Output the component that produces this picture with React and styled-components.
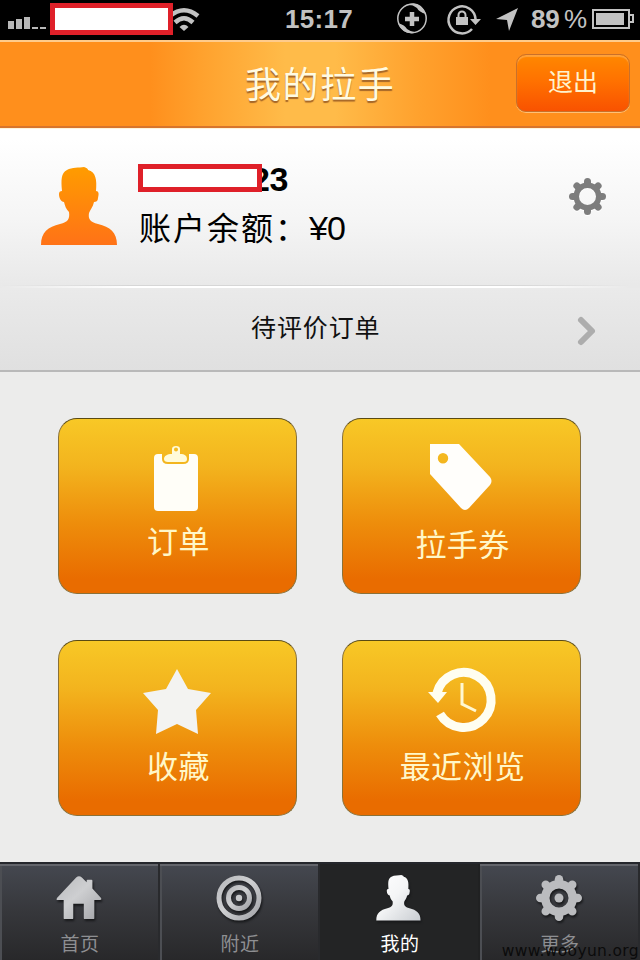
import React from "react";
import styled, { createGlobalStyle, css } from "styled-components";

const GlobalStyle = createGlobalStyle`
  * { box-sizing: border-box; }
  body { margin: 0; background: #ececec; font-family: "Liberation Sans", "Noto Sans CJK SC", sans-serif; }
  svg { display: block; overflow: visible; flex: none; }
`;

const Screen = styled.div`
  position: relative;
  display: flex;
  flex-direction: column;
  width: 640px;
  height: 960px;
  overflow: hidden;
  background: #ececeb;
`;

const StatusBar = styled.div`
  display: flex;
  flex: none;
  align-items: center;
  height: 40px;
  background: #000;
  color: #c2c2c2;
  padding-left: 8px;
`;

const Redaction = styled.div`
  flex: none;
  width: ${(p) => p.$w}px;
  height: ${(p) => p.$h}px;
  border: 5px solid #df2029;
  background: #fff;
`;

const CarrierMask = styled(Redaction)`
  position: relative;
  z-index: 1;
  margin: 0 0 2px 4px;
`;

const StatusText = styled.span`
  flex: none;
  width: ${(p) => p.$w}px;
  margin-left: ${(p) => p.$gap}px;
  font-size: 26px;
  line-height: 39px;
  height: 40px;
  font-weight: ${(p) => p.$weight || 700};
  white-space: nowrap;
  letter-spacing: ${(p) => p.$track || 0}px;
`;

const StatusIcon = styled.svg`
  margin-left: ${(p) => p.$gap}px;
`;

const Header = styled.header`
  display: flex;
  flex: none;
  justify-content: flex-end;
  align-items: flex-start;
  height: 88px;
  padding: 12px 10px 0 0;
  border-top: 2px solid #ffcb8b;
  border-bottom: 2px solid #d8752c;
  background: linear-gradient(90deg, #ff8f1c 150px, #ffa12d 200px, #ffbb49 285px, #ffbb49 335px, #ffa12d 420px, #ff8f1c 490px);
`;

const Title = styled.h1`
  width: 160px;
  margin: 0 111px 0 0;
  font: 400 36px/56px "Noto Sans CJK SC", sans-serif;
  letter-spacing: 1.6px;
  color: #fffbe2;
  text-shadow: 0 2px 1px #a56628;
  white-space: nowrap;
`;

const ExitButton = styled.button`
  width: 114px;
  height: 58px;
  padding: 0 0 6px 0;
  border: 1px solid #c9702a;
  border-radius: 10px;
  background: linear-gradient(#ff8800, #ff7200 45%, #f95200);
  box-shadow: 0 1px 0 #ffc177, inset 0 2px 1px #ffa23b;
  font: 400 25px/48px "Noto Sans CJK SC", sans-serif;
  color: #fff2cd;
`;

const Account = styled.section`
  display: flex;
  flex: none;
  align-items: flex-start;
  height: 157px;
  padding-left: 41px;
  background: linear-gradient(#fff 10px, #f5f5f5 90px, #e9e9e9);
  border-top: 1px solid #fff4d9;
`;

const Avatar = styled.svg`
  margin-top: 38px;
`;

const AccountText = styled.div`
  width: 220px;
  margin: 34px 0 0 19px;
`;

const UserRow = styled.div`
  display: flex;
  align-items: center;
  height: 32px;
  font-size: 34px;
  font-weight: 700;
  line-height: 36px;
  letter-spacing: -0.5px;
`;

const UserMask = styled(Redaction)`
  z-index: 1;
  margin: 0 -11px 2px 0;
`;

const Balance = styled.div`
  display: flex;
  margin: 3px 0 0 1px;
  font-size: 34px;
  line-height: 60px;
  white-space: nowrap;
  letter-spacing: -1px;
`;

const BalanceLabel = styled.span`
  width: 170px;
  font-family: "Noto Sans CJK SC", sans-serif;
  font-size: 32px;
  letter-spacing: 2px;
  line-height: 57px;
`;

const SettingsIcon = styled.svg`
  margin: 49px 0 0 211px;
  filter: drop-shadow(0 1px 0 #fff);
`;

const Divider = styled.div`
  flex: none;
  height: 3px;
  background: linear-gradient(90deg, #e9e9e9, transparent 130px, transparent 510px, #e9e9e9 630px),
    linear-gradient(#d6d6d6 1px, #fff 1px);
`;

const ReviewRow = styled.a`
  display: flex;
  flex: none;
  align-items: center;
  height: 84px;
  padding: 0 44px 0 251px;
  border-bottom: 2px solid #b9b9b9;
  background: linear-gradient(#eaeaea, #e0e0e0);
  font: 400 25px/40px "Noto Sans CJK SC", sans-serif;
  letter-spacing: 0.9px;
  color: #111;
`;

const ReviewLabel = styled.span`
  flex: 1;
  padding-bottom: 7px;
`;

const Chevron = styled.svg`
  margin-top: 2px;
`;

const TileGrid = styled.main`
  display: grid;
  flex: 1;
  grid-template-columns: 239px 239px;
  grid-template-rows: 176px 176px;
  gap: 46px 45px;
  padding: 46px 0 0 58px;
`;

const Tile = styled.button`
  display: flex;
  flex-direction: column;
  align-items: center;
  padding: 26px 0 0;
  border: 1px solid #8a7138;
  border-top-color: #5a4a12;
  border-radius: 19px;
  background: linear-gradient(#f8c826, #f3b41e 27%, #ee8d0b 60%, #e96c00 92%);
  color: #fff7c8;
`;

const TileIcon = styled.svg`
  margin-right: ${(p) => p.$shift || 0}px;
`;

const TileLabel = styled.span`
  margin: ${(p) => p.$top}px 0 0 2px;
  font: 400 31px/44px "Noto Sans CJK SC", sans-serif;
  letter-spacing: 0.4px;
`;

const TabBar = styled.nav`
  display: grid;
  flex: none;
  grid-template-columns: repeat(4, 1fr);
  height: 98px;
  background: #222327;
  border-top: 2px solid #25272c;
`;

const Tab = styled.a`
  display: flex;
  flex-direction: column;
  align-items: center;
  padding: 10px 0 0;
  color: #8e8f92;
  border-right: 2px solid #292a2d;
  ${(p) =>
    p.$active
      ? css`
          background: #232425;
          border-color: #202122;
          color: #fff;
        `
      : css`
          background: linear-gradient(#454850, #36373b 50%, #28282a);
          box-shadow: inset 0 2px 0 #63656b, inset 2px 0 0 #4c4e53;
        `}
`;

const TabIcon = styled.svg`
  margin-top: 1px;
  filter: drop-shadow(1px 2px 1px #17181a);
`;

const TabLabel = styled.span`
  margin: 8px 0 0 2px;
  font: 400 19px/28px "Noto Sans CJK SC", sans-serif;
  letter-spacing: 0.5px;
`;

const Watermark = styled.div`
  position: absolute;
  right: 1px;
  bottom: 0;
  font: 15.5px/18px "DejaVu Sans", sans-serif;
  letter-spacing: 0.35px;
  color: #0b0b0b;
`;

const personPath =
  "M0 78C0 65 7 60 19 57C27 55 29 52 28 45C25 42 24 39 23 35C20 35 18 31 18 27C18 25 19 24 21 24C20 13 20 6 26 3C31 0 38 1 43 0C46 1 47 2 47 3C55 5 56 13 55 24C58 24 58 27 57 31C57 34 55 35 53 35C52 40 49 43 48 46C47 52 49 55 57 57C69 60 76 65 76 78Z";

const Metal = ({ id, bright }) => (
  <linearGradient id={id} x1="0" y1="0" x2="1" y2="1">
    <stop offset="0" stopColor={bright ? "#ffffff" : "#b8b9bc"} />
    <stop offset=".45" stopColor={bright ? "#f4f5f6" : "#cecfd1"} />
    <stop offset="1" stopColor={bright ? "#c9cdd2" : "#a3a4a8"} />
  </linearGradient>
);

function Gear({ as: Frame, size, body, hole, tooth, dot, fill }) {
  const c = size / 2;
  const ring = (body + hole) / 2;
  return (
    <Frame width={size} height={size}>
      <g stroke={fill} strokeWidth={tooth} strokeLinecap="round">
        {Array.from({ length: 8 }, (_, i) => (
          <path key={i} d={`M${c} ${c - body + 1}V${tooth / 2}`} transform={`rotate(${i * 45} ${c} ${c})`} />
        ))}
      </g>
      <circle cx={c} cy={c} r={ring} fill="none" stroke={fill} strokeWidth={body - hole} />
      {dot && <circle cx={c} cy={c} r={dot} fill={fill} />}
    </Frame>
  );
}

const ClipboardIcon = () => (
  <TileIcon $shift={4} width="46" height="67" viewBox="0 0 46 67">
    <path fill="#fffef8" d="M5 9H9V14Q9 19 15 19H30Q36 19 36 14V9H41Q45 9 45 13V62Q45 66 41 66H5Q1 66 1 62V13Q1 9 5 9Z" />
    <path fill="#fffbd9" fillRule="evenodd" d="M19 9V4Q19 1 23 1T27 4V9C32 9 34 11 34 14Q34 17 31 17H15Q11 17 11 14C11 11 14 9 19 9ZM23 2.5A2 2 0 1 0 23 6.5A2 2 0 1 0 23 2.5Z" />
  </TileIcon>
);

const TagIcon = () => (
  <TileIcon $shift={2} width="62" height="68" viewBox="0 1 62 68">
    <path fill="#fffefb" fillRule="evenodd" d="M0 0H29L60 33Q63 37 60 41L39 64Q35 68 31 64L0 30ZM13 9A5.2 5.2 0 1 0 13 19.4A5.2 5.2 0 1 0 13 9Z" />
  </TileIcon>
);

const StarIcon = () => (
  <TileIcon $shift={2} width="68" height="68" viewBox="0 0 68 68">
    <path fill="#f3f3f1" d="M34 2L45 22L68 26L53 43L55 67L34 57L13 67L15 43L0 26L23 22Z" />
  </TileIcon>
);

const HistoryIcon = () => (
  <TileIcon width="68" height="68" viewBox="0 0 68 68">
    <path fill="none" stroke="#fffef0" strokeWidth="9" d="M9 26A27.5 27.5 0 1 1 12 47" />
    <path fill="#fffef0" d="M0 25H19L10 36Z" />
    <path fill="none" stroke="#fff8d2" strokeWidth="3" d="M34 16V37L48 44" />
  </TileIcon>
);

const tiles = [
  { label: "订单", Icon: ClipboardIcon, top: 6 },
  { label: "拉手券", Icon: TagIcon, top: 8 },
  { label: "收藏", Icon: StarIcon, top: 8 },
  { label: "最近浏览", Icon: HistoryIcon, top: 8 },
];

const HomeIcon = () => (
  <TabIcon width="46" height="46" viewBox="0 0 48 46">
    <defs><Metal id="home" /></defs>
    <path fill="url(#home)" d="M21 1.5Q24 -1 27 1.5L32 6.5V5Q32 4 33 4H37Q38 4 38 5V13L47 23Q48 25 46 25H40V44Q40 45 39 45H30Q29 45 29 44V29H18V44Q18 45 17 45H9Q8 45 8 44V25H1Q0 25 1 23Z" />
  </TabIcon>
);

const TargetIcon = () => (
  <TabIcon width="46" height="46">
    <defs><Metal id="target" /></defs>
    <g fill="none" stroke="url(#target)" strokeWidth="5">
      <circle cx="23" cy="23" r="20" />
      <circle cx="23" cy="23" r="10.5" />
    </g>
    <circle cx="23" cy="23" r="3.2" fill="#c7c8ca" />
  </TabIcon>
);

const ProfileIcon = () => (
  <TabIcon width="46" height="46" viewBox="0 0 78 79">
    <defs><Metal id="profile" bright /></defs>
    <path fill="url(#profile)" d={personPath} />
  </TabIcon>
);

const MoreIcon = () => <Gear as={TabIcon} size={46} body={18} hole={9.5} dot={4.5} fill="#bbbcbf" tooth={8.5} />;

const tabs = [
  { label: "首页", Icon: HomeIcon },
  { label: "附近", Icon: TargetIcon },
  { label: "我的", Icon: ProfileIcon, active: true },
  { label: "更多", Icon: MoreIcon },
];

export default function App() {
  return (
    <Screen>
      <GlobalStyle />
      <StatusBar>
        <svg width="38" height="40" fill="#b8b8b8">
          <path d="M0 21H6V29H0ZM8 19H14V29H8ZM16 17H22V29H16ZM24 27H30V29H24ZM32 27H38V29H32Z" />
        </svg>
        <CarrierMask $w={123} $h={32} />
        <StatusIcon $gap={-3} width="30" height="40">
          <g fill="none" stroke="#c2c2c2" strokeWidth="4.5">
            <path d="M0 16Q14 4.5 28 16" />
            <path d="M5 22.5Q14 14 23 22.5" />
          </g>
          <path fill="#c2c2c2" d="M9.5 27Q14 22.5 18.5 27L14 31Z" />
        </StatusIcon>
        <StatusText $gap={85} $w={70} $track={0.3}>15:17</StatusText>
        <StatusIcon $gap={42} width="30" height="40" fill="none" stroke="#c2c2c2">
          <circle cx="15" cy="18.5" r="14.2" strokeWidth="1.5" />
          <path strokeWidth="4.5" d="M15 12V26M8 19H22" />
          <path fill="#c2c2c2" stroke="none" d="M9 5Q23 -1 29 14Q22 12 20 8Q15 4 9 5ZM1 23Q8 25 10 29Q15 33 21 32Q7 37 1 23Z" />
        </StatusIcon>
        <StatusIcon $gap={20} width="34" height="40" fill="none" stroke="#c2c2c2">
          <path strokeWidth="2.5" d="M25 29A13.5 13.5 0 1 1 28.5 19" />
          <path fill="#c2c2c2" stroke="none" d="M23 19H34L28.5 25ZM9 17H21V25H9Z" />
          <path strokeWidth="2" d="M11.5 18V15A3.5 3.5 0 0 1 18.5 15V18" />
        </StatusIcon>
        <StatusIcon $gap={15} width="22" height="40">
          <path fill="#c2c2c2" d="M22 8L13 31L11 20L0 19Z" />
        </StatusIcon>
        <StatusText $gap={13} $w={33} $track={-0.3}>89</StatusText>
        <StatusText $gap={0} $w={23} $weight={400}>%</StatusText>
        <StatusIcon $gap={4} width="43" height="40">
          <path fill="none" stroke="#c2c2c2" strokeWidth="2" d="M2 10H38V28H2ZM38 15H42V22H38" />
          <path fill="#c2c2c2" d="M5 13H33V25H5Z" />
        </StatusIcon>
      </StatusBar>

      <Header>
        <Title>我的拉手</Title>
        <ExitButton>退出</ExitButton>
      </Header>

      <Account>
        <Avatar width="78" height="79">
          <defs>
            <linearGradient id="avatar" x1="0" y1="0" x2="0" y2="1">
              <stop stopColor="#ff9c00" />
              <stop offset="1" stopColor="#ff7217" />
            </linearGradient>
          </defs>
          <path fill="url(#avatar)" d={personPath} />
        </Avatar>
        <AccountText>
          <UserRow>
            <UserMask $w={124} $h={28} />
            23
          </UserRow>
          <Balance>
            <BalanceLabel>账户余额：</BalanceLabel>
            ¥0
          </Balance>
        </AccountText>
        <Gear as={SettingsIcon} size={37} body={14} hole={8.5} fill="#7d7d7d" tooth={7} />
      </Account>
      <Divider />
      <ReviewRow>
        <ReviewLabel>待评价订单</ReviewLabel>
        <Chevron width="19" height="30">
          <path fill="none" stroke="#adadad" strokeWidth="6" strokeLinecap="round" strokeLinejoin="round" d="M4 5L15 16L4 27" />
        </Chevron>
      </ReviewRow>

      <TileGrid>
        {tiles.map(({ label, Icon, top }) => (
          <Tile key={label}>
            <Icon />
            <TileLabel $top={top}>{label}</TileLabel>
          </Tile>
        ))}
      </TileGrid>

      <TabBar>
        {tabs.map(({ label, Icon, active }) => (
          <Tab key={label} $active={active}>
            <Icon />
            <TabLabel>{label}</TabLabel>
          </Tab>
        ))}
      </TabBar>
      <Watermark>www.wooyun.org</Watermark>
    </Screen>
  );
}
